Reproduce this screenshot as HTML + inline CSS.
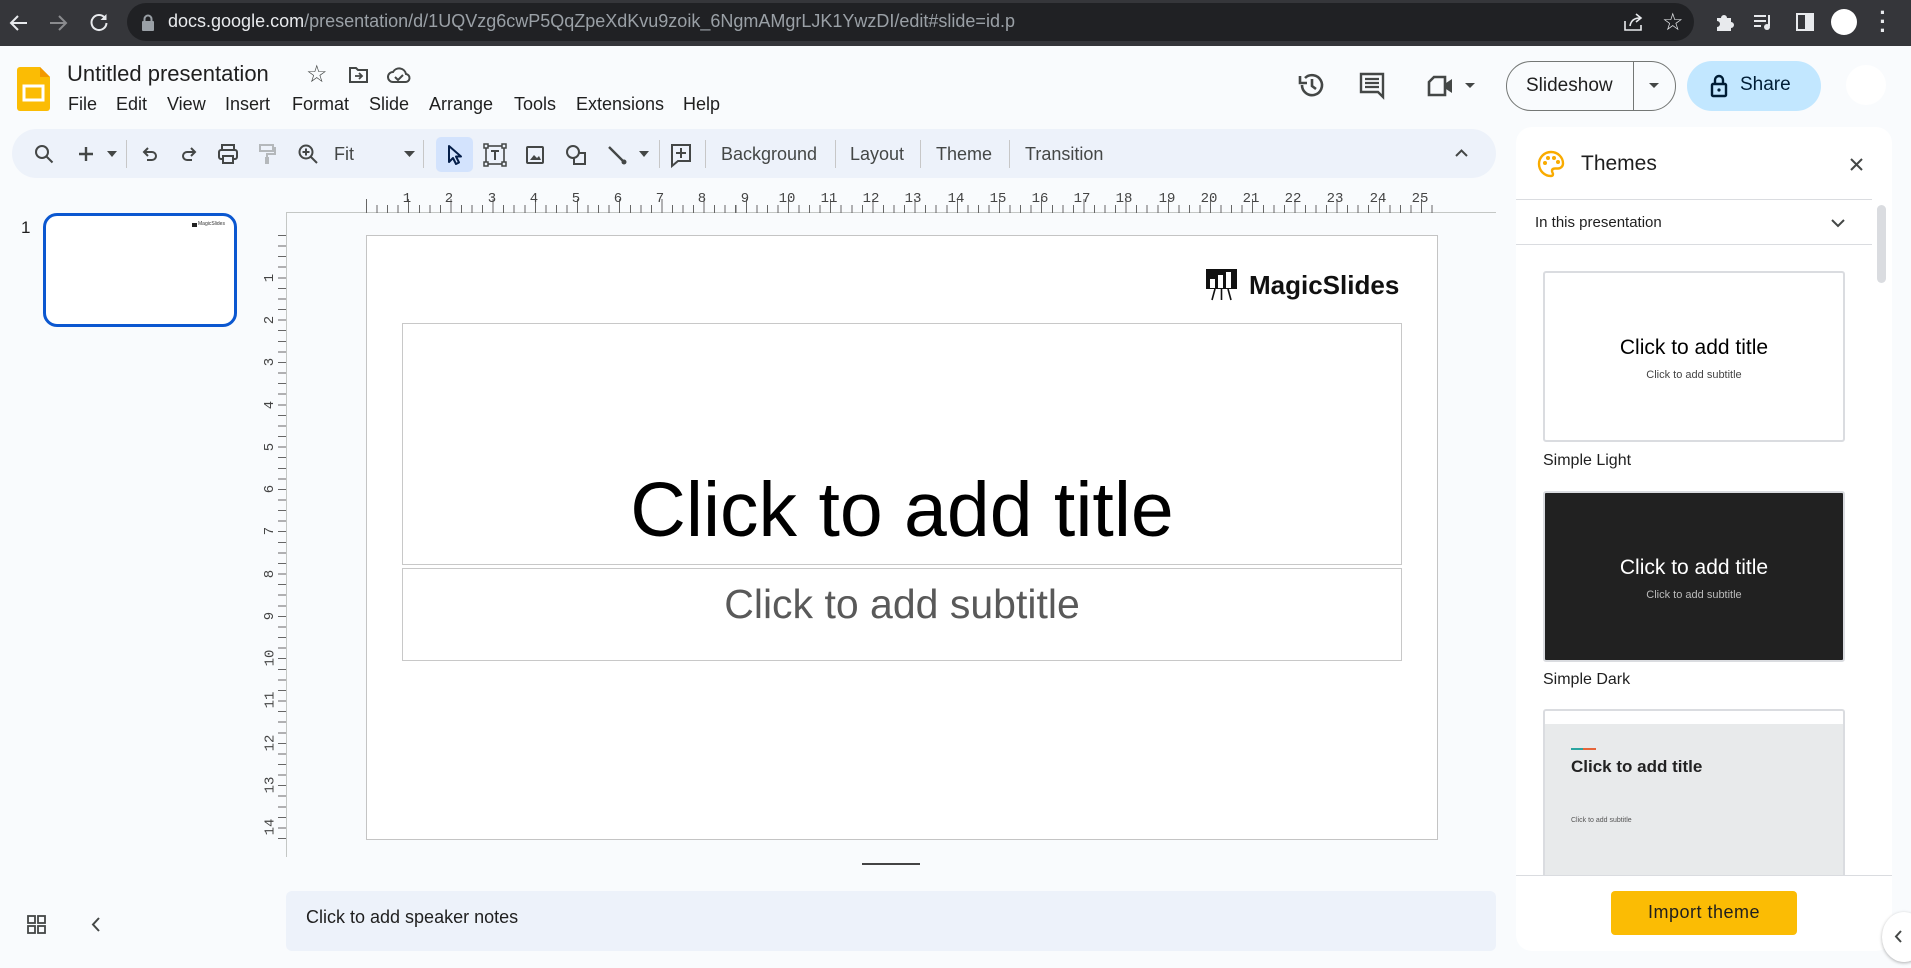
<!DOCTYPE html>
<html><head><meta charset="utf-8"><style>
*{box-sizing:border-box;margin:0;padding:0}
body{width:1911px;height:968px;overflow:hidden;background:#f9fbfd;font-family:"Liberation Sans",Arial,sans-serif;position:relative;color:#444746}
.a{position:absolute}
svg{position:absolute;overflow:visible}
.tb{font-size:18px;color:#444746}
.sep{position:absolute;width:1px;height:28px;background:#c7c7c7;top:140px}
.hn{position:absolute;top:191px;font-family:"Liberation Mono",monospace;font-size:14px;color:#444;transform:translateX(-50%)}
.vn{position:absolute;left:266px;font-family:"Liberation Mono",monospace;font-size:14px;color:#444;transform:translateY(-50%) rotate(-90deg)}
</style></head><body>
<!-- chrome bar -->
<div class="a" style="left:0;top:0;width:1911px;height:46px;background:#35363a"></div>
<div class="a" style="left:127px;top:3px;width:1567px;height:38px;border-radius:19px;background:#202124"></div>
<svg style="left:8px;top:12px" width="22" height="22" viewBox="0 0 22 22"><path d="M19 11H4M10 4l-7 7 7 7" stroke="#e8eaed" stroke-width="2" fill="none"/></svg>
<svg style="left:47px;top:12px" width="22" height="22" viewBox="0 0 22 22"><path d="M3 11h15M12 4l7 7-7 7" stroke="#8a8b8e" stroke-width="2" fill="none"/></svg>
<svg style="left:88px;top:11px" width="22" height="22" viewBox="0 0 22 22"><path d="M17 7A7.5 7.5 0 1 0 18.5 12" stroke="#e8eaed" stroke-width="2" fill="none"/><path d="M18.5 3v6h-6z" fill="#e8eaed"/></svg>
<svg style="left:141px;top:14px" width="14" height="18" viewBox="0 0 14 18"><rect x="1" y="7" width="12" height="10" rx="1" fill="#9aa0a6"/><path d="M3.5 7V5a3.5 3.5 0 0 1 7 0v2" stroke="#9aa0a6" stroke-width="2" fill="none"/></svg>
<div class="a" style="left:168px;top:11px;font-size:18px;color:#9aa0a6;white-space:nowrap"><span style="color:#e8eaed">docs.google.com</span>/presentation/d/1UQVzg6cwP5QqZpeXdKvu9zoik_6NgmAMgrLJK1YwzDI/edit#slide=id.p</div>
<svg style="left:1622px;top:11px" width="22" height="22" viewBox="0 0 22 22"><path d="M3 10v9h16v-5M8 15c1-6 5-8 10-8M14 3l5 4-5 4" stroke="#e8eaed" stroke-width="1.6" fill="none"/></svg>
<div class="a" style="left:1662px;top:8px;font-size:24px;color:#e8eaed">☆</div>
<svg style="left:1713px;top:11px" width="22" height="22" viewBox="0 0 22 22"><path d="M4 7h4a3 3 0 0 1 6 0h4v4a3 3 0 0 1 0 6v3H4v-4a3 3 0 0 0 0-6z" fill="#e8eaed"/></svg>
<svg style="left:1752px;top:11px" width="22" height="22" viewBox="0 0 22 22"><path d="M2 5h12M2 10h12M2 15h7" stroke="#e8eaed" stroke-width="2"/><path d="M17 4v11" stroke="#e8eaed" stroke-width="2"/><circle cx="15" cy="16" r="3" fill="#e8eaed"/></svg>
<svg style="left:1794px;top:11px" width="22" height="22" viewBox="0 0 22 22"><rect x="3" y="3" width="16" height="16" stroke="#e8eaed" stroke-width="2" fill="none"/><rect x="11" y="3" width="8" height="16" fill="#e8eaed"/></svg>
<div class="a" style="left:1831px;top:9px;width:26px;height:26px;border-radius:50%;background:#fff"></div>
<div class="a" style="left:1879px;top:8px;font-size:22px;color:#e8eaed;font-weight:bold;line-height:9px;width:8px;text-align:center">·<br>·<br>·</div>

<!-- header -->
<svg style="left:17px;top:67px" width="33" height="44" viewBox="0 0 33 44"><path d="M3 0h20l10 10v31a3 3 0 0 1-3 3H3a3 3 0 0 1-3-3V3a3 3 0 0 1 3-3z" fill="#fbbc04"/><path d="M23 0l10 10H23z" fill="#f29900"/><rect x="7" y="19" width="19" height="14" fill="none" stroke="#fff" stroke-width="3"/></svg>
<div class="a" style="left:67px;top:61px;font-size:22px;color:#1f1f1f">Untitled presentation</div>
<div class="a" style="left:306px;top:60px;font-size:24px;color:#444746">☆</div>
<svg style="left:348px;top:65px" width="22" height="20" viewBox="0 0 22 20"><path d="M2 3h6l2 2h9v12H2z" stroke="#444746" stroke-width="2" fill="none"/><path d="M7 11h7M11 8l3 3-3 3" stroke="#444746" stroke-width="1.8" fill="none"/></svg>
<svg style="left:387px;top:65px" width="24" height="20" viewBox="0 0 24 20"><path d="M6 17a5 5 0 0 1 0-10 7 7 0 0 1 13 2 4 4 0 0 1-1 8z" stroke="#444746" stroke-width="2" fill="none"/><path d="M8 12l3 3 5-5" stroke="#444746" stroke-width="2" fill="none"/></svg>
<div class="a" style="left:68px;top:94px;font-size:18px;color:#1f1f1f;word-spacing:0;white-space:nowrap">
<span style="position:absolute;left:0">File</span><span style="position:absolute;left:48px">Edit</span><span style="position:absolute;left:99px">View</span><span style="position:absolute;left:157px">Insert</span><span style="position:absolute;left:224px">Format</span><span style="position:absolute;left:301px">Slide</span><span style="position:absolute;left:361px">Arrange</span><span style="position:absolute;left:446px">Tools</span><span style="position:absolute;left:508px">Extensions</span><span style="position:absolute;left:615px">Help</span></div>

<svg style="left:1297px;top:71px" width="28" height="28" viewBox="0 0 28 28"><path d="M5 14a10 10 0 1 0 3-7" stroke="#444746" stroke-width="2.6" fill="none"/><path d="M3 5v7h7" stroke="#444746" stroke-width="2.6" fill="none"/><path d="M15 8v7l4 3" stroke="#444746" stroke-width="2.6" fill="none"/></svg>
<svg style="left:1359px;top:72px" width="26" height="26" viewBox="0 0 26 26"><path d="M2 2h22v18h0v5l-5-5H2z" stroke="#444746" stroke-width="2.4" fill="none"/><path d="M6 7h14M6 11h14M6 15h14" stroke="#444746" stroke-width="2.2"/></svg>
<svg style="left:1427px;top:74px" width="28" height="24" viewBox="0 0 28 24"><path d="M2 8l5-5h11v18H2z" stroke="#444746" stroke-width="2.6" fill="none"/><path d="M19 9l6-4v14l-6-4z" fill="#444746"/></svg>
<svg style="left:1464px;top:82px" width="12" height="7" viewBox="0 0 12 7"><path d="M1 1h10L6 6z" fill="#444746"/></svg>
<div class="a" style="left:1506px;top:61px;width:170px;height:50px;border:1px solid #747775;border-radius:25px"></div>
<div class="a" style="left:1633px;top:61px;width:1px;height:50px;background:#747775"></div>
<div class="a" style="left:1526px;top:75px;font-size:19px;color:#1f1f1f">Slideshow</div>
<svg style="left:1648px;top:82px" width="12" height="7" viewBox="0 0 12 7"><path d="M1 1h10L6 6z" fill="#444746"/></svg>
<div class="a" style="left:1687px;top:61px;width:134px;height:50px;border-radius:25px;background:#c2e7ff"></div>
<svg style="left:1710px;top:74px" width="18" height="24" viewBox="0 0 18 24"><rect x="2" y="10" width="14" height="12" rx="1" stroke="#001d35" stroke-width="2.4" fill="none"/><path d="M5 10V6a4 4 0 0 1 8 0v4" stroke="#001d35" stroke-width="2.4" fill="none"/><circle cx="9" cy="16" r="1.6" fill="#001d35"/></svg>
<div class="a" style="left:1740px;top:74px;font-size:19px;color:#001d35">Share</div>
<div class="a" style="left:1846px;top:65px;width:40px;height:40px;border-radius:50%;background:#fff"></div>

<!-- toolbar -->
<div class="a" style="left:12px;top:129px;width:1484px;height:49px;border-radius:25px;background:#edf2fa"></div>
<svg style="left:34px;top:144px" width="20" height="20" viewBox="0 0 20 20"><circle cx="8" cy="8" r="6" stroke="#444746" stroke-width="2" fill="none"/><path d="M12.5 12.5l6 6" stroke="#444746" stroke-width="2"/></svg>
<svg style="left:78px;top:146px" width="16" height="16" viewBox="0 0 16 16"><path d="M8 1v14M1 8h14" stroke="#444746" stroke-width="2.4"/></svg>
<svg style="left:107px;top:151px" width="10" height="6" viewBox="0 0 10 6"><path d="M0 0h10L5 6z" fill="#444746"/></svg>
<div class="sep" style="left:126px"></div>
<svg style="left:141px;top:145px" width="18" height="18" viewBox="0 0 18 18"><path d="M4 7h7a4 4 0 0 1 0 8H6M7 3L3 7l4 4" stroke="#444746" stroke-width="2" fill="none"/></svg>
<svg style="left:180px;top:145px" width="18" height="18" viewBox="0 0 18 18"><path d="M14 7H7a4 4 0 0 0 0 8h5M11 3l4 4-4 4" stroke="#444746" stroke-width="2" fill="none"/></svg>
<svg style="left:217px;top:143px" width="22" height="22" viewBox="0 0 22 22"><rect x="5" y="2" width="12" height="5" stroke="#444746" stroke-width="2" fill="none"/><rect x="2" y="7" width="18" height="9" rx="2" stroke="#444746" stroke-width="2" fill="none"/><rect x="6" y="13" width="10" height="7" fill="#edf2fa" stroke="#444746" stroke-width="2"/></svg>
<svg style="left:258px;top:143px" width="18" height="22" viewBox="0 0 18 22"><rect x="2" y="2" width="13" height="6" stroke="#b4b8bb" stroke-width="2" fill="none"/><path d="M15 5h2v6H9v3" stroke="#b4b8bb" stroke-width="2" fill="none"/><rect x="7" y="14" width="4" height="7" fill="#b4b8bb"/></svg>
<svg style="left:297px;top:143px" width="22" height="22" viewBox="0 0 22 22"><circle cx="9" cy="9" r="6.5" stroke="#444746" stroke-width="2" fill="none"/><path d="M14 14l6 6M9 5.5v7M5.5 9h7" stroke="#444746" stroke-width="2"/></svg>
<div class="a tb" style="left:334px;top:144px">Fit</div>
<svg style="left:404px;top:151px" width="11" height="6" viewBox="0 0 11 6"><path d="M0 0h11L5.5 6z" fill="#444746"/></svg>
<div class="sep" style="left:423px"></div>
<div class="a" style="left:436px;top:137px;width:37px;height:35px;border-radius:5px;background:#d3e3fd"></div>
<svg style="left:447px;top:144px" width="16" height="22" viewBox="0 0 16 22"><path d="M2 2v16l4-4 3 6 3-1.5-3-6h5z" stroke="#041e49" stroke-width="2" fill="none" stroke-linejoin="round"/></svg>
<svg style="left:483px;top:143px" width="24" height="24" viewBox="0 0 24 24"><rect x="3" y="3" width="18" height="18" stroke="#444746" stroke-width="1.6" fill="none"/><rect x="1" y="1" width="4" height="4" fill="#edf2fa" stroke="#444746" stroke-width="1.5"/><rect x="19" y="1" width="4" height="4" fill="#edf2fa" stroke="#444746" stroke-width="1.5"/><rect x="1" y="19" width="4" height="4" fill="#edf2fa" stroke="#444746" stroke-width="1.5"/><rect x="19" y="19" width="4" height="4" fill="#edf2fa" stroke="#444746" stroke-width="1.5"/><path d="M8 8h8M12 8v9" stroke="#444746" stroke-width="2"/></svg>
<svg style="left:525px;top:145px" width="20" height="20" viewBox="0 0 20 20"><rect x="2" y="2" width="16" height="16" rx="1" stroke="#444746" stroke-width="2" fill="none"/><path d="M5 15l4-5 3 3 2-2 2 4z" fill="#444746"/></svg>
<svg style="left:565px;top:144px" width="22" height="22" viewBox="0 0 22 22"><circle cx="8" cy="8" r="6" stroke="#444746" stroke-width="2" fill="none"/><path d="M13 9h7v11H9v-6" stroke="#444746" stroke-width="2" fill="none"/></svg>
<svg style="left:606px;top:144px" width="22" height="22" viewBox="0 0 22 22"><path d="M3 3l16 16" stroke="#444746" stroke-width="2.4"/><circle cx="18" cy="18" r="2.5" fill="#444746"/></svg>
<svg style="left:639px;top:151px" width="10" height="6" viewBox="0 0 10 6"><path d="M0 0h10L5 6z" fill="#444746"/></svg>
<div class="sep" style="left:659px"></div>
<svg style="left:670px;top:143px" width="22" height="24" viewBox="0 0 22 24"><path d="M2 2h18v16H8l-6 5z" stroke="#444746" stroke-width="2" fill="none"/><path d="M11 5v10M6 10h10" stroke="#444746" stroke-width="2"/></svg>
<div class="sep" style="left:705px"></div>
<div class="a tb" style="left:721px;top:144px">Background</div>
<div class="sep" style="left:835px"></div>
<div class="a tb" style="left:850px;top:144px">Layout</div>
<div class="sep" style="left:920px"></div>
<div class="a tb" style="left:936px;top:144px">Theme</div>
<div class="sep" style="left:1009px"></div>
<div class="a tb" style="left:1025px;top:144px">Transition</div>
<svg style="left:1455px;top:149px" width="13" height="8" viewBox="0 0 13 8"><path d="M1 7l5.5-5.5L12 7" stroke="#444746" stroke-width="2" fill="none"/></svg>

<!-- slide thumbnail -->
<div class="a" style="left:21px;top:218px;font-size:17px;color:#1f1f1f">1</div>
<div class="a" style="left:43px;top:213px;width:194px;height:114px;border:3px solid #0b57d0;border-radius:14px;background:#fff"></div>
<div class="a" style="left:192px;top:223px;width:5px;height:4px;background:#222"></div>
<div class="a" style="left:198px;top:221px;font-size:5px;color:#333">MagicSlides</div>

<!-- rulers -->
<div class="a" style="left:286px;top:212px;width:1210px;height:1px;background:#c4c7c5"></div>
<div class="a" style="left:366px;top:205px;width:1072px;height:8px;background:repeating-linear-gradient(90deg,#666 0 1px,transparent 1px 10.55px)"></div>
<div class="a" style="left:366px;top:199px;width:1072px;height:14px;background:repeating-linear-gradient(90deg,#666 0 1px,transparent 1px 42.2px)"></div>
<div class="a" style="left:286px;top:212px;width:1px;height:645px;background:#c4c7c5"></div>
<div class="a" style="left:278px;top:235px;width:8px;height:605px;background:repeating-linear-gradient(180deg,#666 0 1px,transparent 1px 10.58px)"></div>
<div class="hn" style="left:407px">1</div><div class="hn" style="left:449px">2</div><div class="hn" style="left:492px">3</div><div class="hn" style="left:534px">4</div><div class="hn" style="left:576px">5</div><div class="hn" style="left:618px">6</div><div class="hn" style="left:660px">7</div><div class="hn" style="left:702px">8</div><div class="hn" style="left:745px">9</div><div class="hn" style="left:787px">10</div><div class="hn" style="left:829px">11</div><div class="hn" style="left:871px">12</div><div class="hn" style="left:913px">13</div><div class="hn" style="left:956px">14</div><div class="hn" style="left:998px">15</div><div class="hn" style="left:1040px">16</div><div class="hn" style="left:1082px">17</div><div class="hn" style="left:1124px">18</div><div class="hn" style="left:1167px">19</div><div class="hn" style="left:1209px">20</div><div class="hn" style="left:1251px">21</div><div class="hn" style="left:1293px">22</div><div class="hn" style="left:1335px">23</div><div class="hn" style="left:1378px">24</div><div class="hn" style="left:1420px">25</div>
<div class="vn" style="top:278px">1</div><div class="vn" style="top:320px">2</div><div class="vn" style="top:362px">3</div><div class="vn" style="top:405px">4</div><div class="vn" style="top:447px">5</div><div class="vn" style="top:489px">6</div><div class="vn" style="top:531px">7</div><div class="vn" style="top:574px">8</div><div class="vn" style="top:616px">9</div><div class="vn" style="top:658px;left:262px">10</div><div class="vn" style="top:700px;left:262px">11</div><div class="vn" style="top:743px;left:262px">12</div><div class="vn" style="top:785px;left:262px">13</div><div class="vn" style="top:827px;left:262px">14</div>

<!-- slide -->
<div class="a" style="left:366px;top:235px;width:1072px;height:605px;background:#fff;border:1px solid #c4c4c4"></div>
<svg style="left:1205px;top:268px" width="33" height="33" viewBox="0 0 33 33"><rect x="1" y="1" width="31" height="20" fill="#111"/><rect x="5" y="11" width="5" height="9" fill="#fff"/><rect x="13" y="7" width="5" height="13" fill="#fff"/><rect x="21" y="4" width="5" height="16" fill="#fff"/><path d="M10 21l-3 11M16.5 21v11M23 21l3 11" stroke="#111" stroke-width="1.6"/></svg>
<div class="a" style="left:1249px;top:270px;font-size:26px;color:#111;font-weight:bold">MagicSlides</div>
<div class="a" style="left:402px;top:323px;width:1000px;height:242px;border:1px solid #c8c8c8"></div>
<div class="a" style="left:402px;top:465px;width:1000px;text-align:center;font-size:77px;color:#000;line-height:90px">Click to add title</div>
<div class="a" style="left:402px;top:568px;width:1000px;height:93px;border:1px solid #c8c8c8"></div>
<div class="a" style="left:402px;top:579px;width:1000px;text-align:center;font-size:41px;color:#595959;line-height:50px">Click to add subtitle</div>
<div class="a" style="left:862px;top:863px;width:58px;height:2px;background:#444"></div>

<!-- notes -->
<div class="a" style="left:286px;top:891px;width:1210px;height:60px;border-radius:6px;background:#edf2fa"></div>
<div class="a" style="left:306px;top:907px;font-size:18px;color:#1f1f1f">Click to add speaker notes</div>
<svg style="left:27px;top:915px" width="19" height="19" viewBox="0 0 19 19"><rect x="1" y="1" width="7" height="7" stroke="#444746" stroke-width="1.8" fill="none"/><rect x="11" y="1" width="7" height="7" stroke="#444746" stroke-width="1.8" fill="none"/><rect x="1" y="11" width="7" height="7" stroke="#444746" stroke-width="1.8" fill="none"/><rect x="11" y="11" width="7" height="7" stroke="#444746" stroke-width="1.8" fill="none"/></svg>
<svg style="left:91px;top:917px" width="10" height="15" viewBox="0 0 10 15"><path d="M8 1L2 7.5 8 14" stroke="#444746" stroke-width="2" fill="none"/></svg>

<!-- themes panel -->
<div class="a" style="left:1516px;top:127px;width:376px;height:824px;border-radius:16px;background:#fff"></div>
<svg style="left:1537px;top:150px" width="28" height="28" viewBox="0 0 28 28"><path d="M14 2a12 12 0 0 0 0 24c1.5 0 2-1 2-2s-1-1.5-1-3 1-2.5 3-2.5h3a5 5 0 0 0 5-5C26 7 20.5 2 14 2z" stroke="#f9ab00" stroke-width="2.4" fill="none"/><circle cx="8" cy="13" r="2" fill="#f9ab00"/><circle cx="11" cy="8" r="2" fill="#f9ab00"/><circle cx="17" cy="8" r="2" fill="#f9ab00"/><circle cx="21" cy="12" r="2" fill="#f9ab00"/></svg>
<div class="a" style="left:1581px;top:152px;font-size:21px;color:#1f1f1f">Themes</div>
<svg style="left:1850px;top:158px" width="13" height="13" viewBox="0 0 13 13"><path d="M1 1l11 11M12 1L1 12" stroke="#444746" stroke-width="2"/></svg>
<div class="a" style="left:1516px;top:199px;width:356px;height:1px;background:#dadce0"></div>
<div class="a" style="left:1535px;top:214px;font-size:15px;color:#1f1f1f">In this presentation</div>
<svg style="left:1831px;top:219px" width="14" height="9" viewBox="0 0 14 9"><path d="M1 1l6 6 6-6" stroke="#444746" stroke-width="2" fill="none"/></svg>
<div class="a" style="left:1516px;top:244px;width:356px;height:1px;background:#dadce0"></div>
<div class="a" style="left:1877px;top:205px;width:9px;height:78px;border-radius:5px;background:#dadce0"></div>

<div class="a" style="left:1543px;top:271px;width:302px;height:171px;border:2px solid #dadce0;border-radius:3px;background:#fff"></div>
<div class="a" style="left:1543px;top:336px;width:302px;text-align:center;font-size:21px;color:#000">Click to add title</div>
<div class="a" style="left:1543px;top:369px;width:302px;text-align:center;font-size:11px;color:#444">Click to add subtitle</div>
<div class="a" style="left:1543px;top:452px;font-size:16px;color:#1f1f1f">Simple Light</div>

<div class="a" style="left:1543px;top:491px;width:302px;height:171px;border:2px solid #dadce0;border-radius:3px;background:#212121"></div>
<div class="a" style="left:1543px;top:556px;width:302px;text-align:center;font-size:21px;color:#fff">Click to add title</div>
<div class="a" style="left:1543px;top:589px;width:302px;text-align:center;font-size:11px;color:#bbb">Click to add subtitle</div>
<div class="a" style="left:1543px;top:671px;font-size:16px;color:#1f1f1f">Simple Dark</div>

<div class="a" style="left:1543px;top:709px;width:302px;height:166px;border:2px solid #dadce0;border-bottom:none;border-radius:3px 3px 0 0;background:#e8eaeb;overflow:hidden"><div style="height:13px;background:#fff"></div></div>
<div class="a" style="left:1571px;top:748px;width:12px;height:2px;background:#2aa5a0"></div>
<div class="a" style="left:1583px;top:748px;width:13px;height:2px;background:#e5653a"></div>
<div class="a" style="left:1571px;top:757px;font-size:17px;font-weight:bold;color:#222">Click to add title</div>
<div class="a" style="left:1571px;top:817px;font-size:7px;color:#555">Click to add subtitle</div>

<div class="a" style="left:1516px;top:875px;width:376px;height:1px;background:#dadce0"></div>
<div class="a" style="left:1611px;top:891px;width:186px;height:44px;border-radius:4px;background:#fbbc04"></div>
<div class="a" style="left:1611px;top:902px;width:186px;text-align:center;font-size:18px;color:#1f1f1f;letter-spacing:0.5px">Import theme</div>
<div class="a" style="left:1882px;top:912px;width:44px;height:50px;border-radius:50%;background:#fff;box-shadow:0 1px 3px rgba(0,0,0,.3)"></div>
<svg style="left:1894px;top:930px" width="9" height="13" viewBox="0 0 9 13"><path d="M7 1L2 6.5 7 12" stroke="#444746" stroke-width="2" fill="none"/></svg>
</body></html>
